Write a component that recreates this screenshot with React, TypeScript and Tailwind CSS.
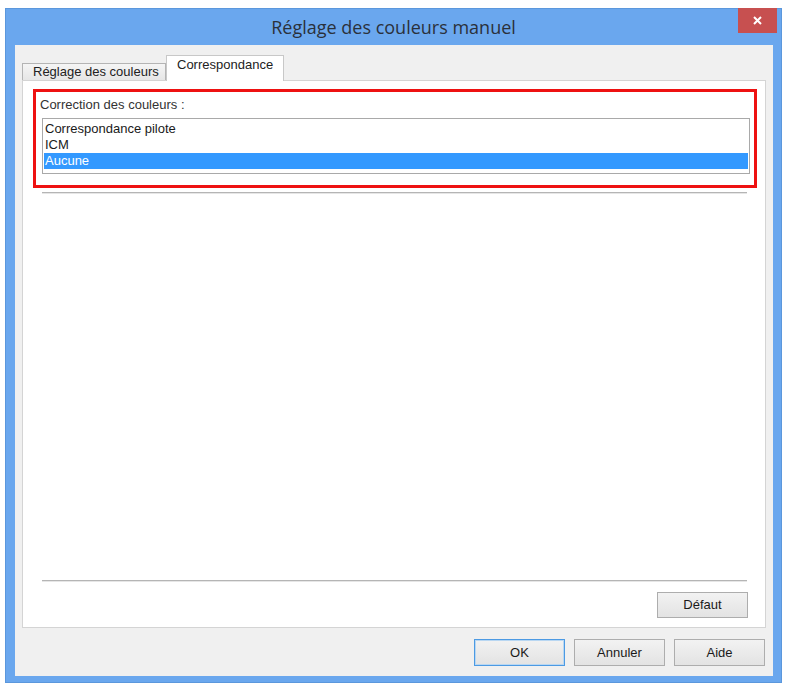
import { JSX } from "react";

const sysFont = { fontFamily: '"Liberation Sans", Arial, sans-serif' };

const DialogButton = ({ label, primary = false }: { label: string; primary?: boolean }): JSX.Element => (
  <button
    className={`w-[91px] h-[27px] flex items-center justify-center text-[13px] text-[#1a1a1a] bg-gradient-to-b from-[#f2f2f2] to-[#e3e3e3] border ${
      primary ? "border-[#4c9ae3] shadow-[inset_0_0_0_1px_#b9d7f2]" : "border-[#adadad]"
    }`}
  >
    {label}
  </button>
);

const App = (): JSX.Element => {
  const items = ["Correspondance pilote", "ICM", "Aucune"];

  return (
    <div className="w-[785px] h-[684px] bg-white pl-[5px] pt-[8px]" style={sysFont}>
      {/* Window */}
      <div className="w-[777px] h-[675px] bg-[#6aa7ee] border border-[#5b97dc] flex flex-col">
        {/* Title bar */}
        <div className="h-[36px] grid grid-cols-[1fr_auto_1fr] items-start">
          <div />
          <div
            className="pt-[7px] text-[18px] text-[#2a313b] leading-[22px]"
            style={{ fontFamily: '"Open Sans", "Noto Sans", sans-serif' }}
          >
            Réglage des couleurs manuel
          </div>
          <div className="flex justify-end pr-[4px] -mt-px">
            <div className="w-[39px] h-[25px] bg-[#c75050] flex items-center justify-center">
              <svg width="9" height="9" viewBox="0 0 9 9">
                <path d="M1 1 L8 8 M8 1 L1 8" stroke="white" strokeWidth="2" />
              </svg>
            </div>
          </div>
        </div>

        {/* Client area */}
        <div className="ml-[9px] mr-[8px] h-[631px] bg-[#f0f0f0] px-[7px] pt-[10px] flex flex-col">
          {/* Tabs */}
          <div className="flex items-end h-[25px] relative z-10">
            <div className="w-[144px] h-[17px] border border-b-0 border-[#b4b4b4] bg-gradient-to-b from-[#f5f5f5] to-[#e6e6e6] text-[13px] leading-[16px] text-[#222] px-[10px] whitespace-nowrap overflow-hidden">
              Réglage des couleurs
            </div>
            <div className="w-[118px] h-[26px] -mb-px border border-b-0 border-[#c8c8c8] bg-white text-[13px] leading-[16px] text-[#222] px-[10px] pt-[1px] whitespace-nowrap">
              Correspondance
            </div>
          </div>

          {/* Tab panel */}
          <div className="h-[548px] bg-white border border-[#d4d4d4] flex flex-col">
            {/* Highlighted group */}
            <div className="mt-[8px] ml-[10px] mr-[8px] h-[99px] border-[3px] border-[#ee1111] flex flex-col">
              <div className="h-[26px] pl-[4px] pt-[5px] text-[13px] leading-[16px] text-[#333]">
                Correction des couleurs :
              </div>
              <div className="ml-[6px] mr-[4px] h-[56px] border border-[#a9a9a9] pt-[2px] px-px">
                {items.map((item, i) => (
                  <div
                    key={item}
                    className={`h-[16px] leading-[16px] text-[13px] px-px ${
                      i === 2 ? "bg-[#3399ff] text-white" : "text-[#1a1a1a]"
                    }`}
                  >
                    {item}
                  </div>
                ))}
              </div>
            </div>

            <div className="mt-[4px] ml-[19px] mr-[18px] h-[2px] border-t border-[#b5b5b5] border-b border-b-[#e6e6e6]" />

            <div className="flex-1" />

            <div className="ml-[19px] mr-[18px] h-[2px] border-t border-[#b5b5b5] border-b border-b-[#e6e6e6]" />
            <div className="flex justify-end mr-[17px] mt-[10px] mb-[9px]">
              <div className="w-[91px] h-[26px] flex items-center justify-center text-[13px] text-[#1a1a1a] bg-gradient-to-b from-[#f2f2f2] to-[#e3e3e3] border border-[#adadad]">
                Défaut
              </div>
            </div>
          </div>

          {/* Dialog buttons */}
          <div className="flex justify-end gap-[9px] mt-[11px] pr-[1px]">
            <DialogButton label="OK" primary />
            <DialogButton label="Annuler" />
            <DialogButton label="Aide" />
          </div>
        </div>
      </div>
    </div>
  );
};

export default App;
